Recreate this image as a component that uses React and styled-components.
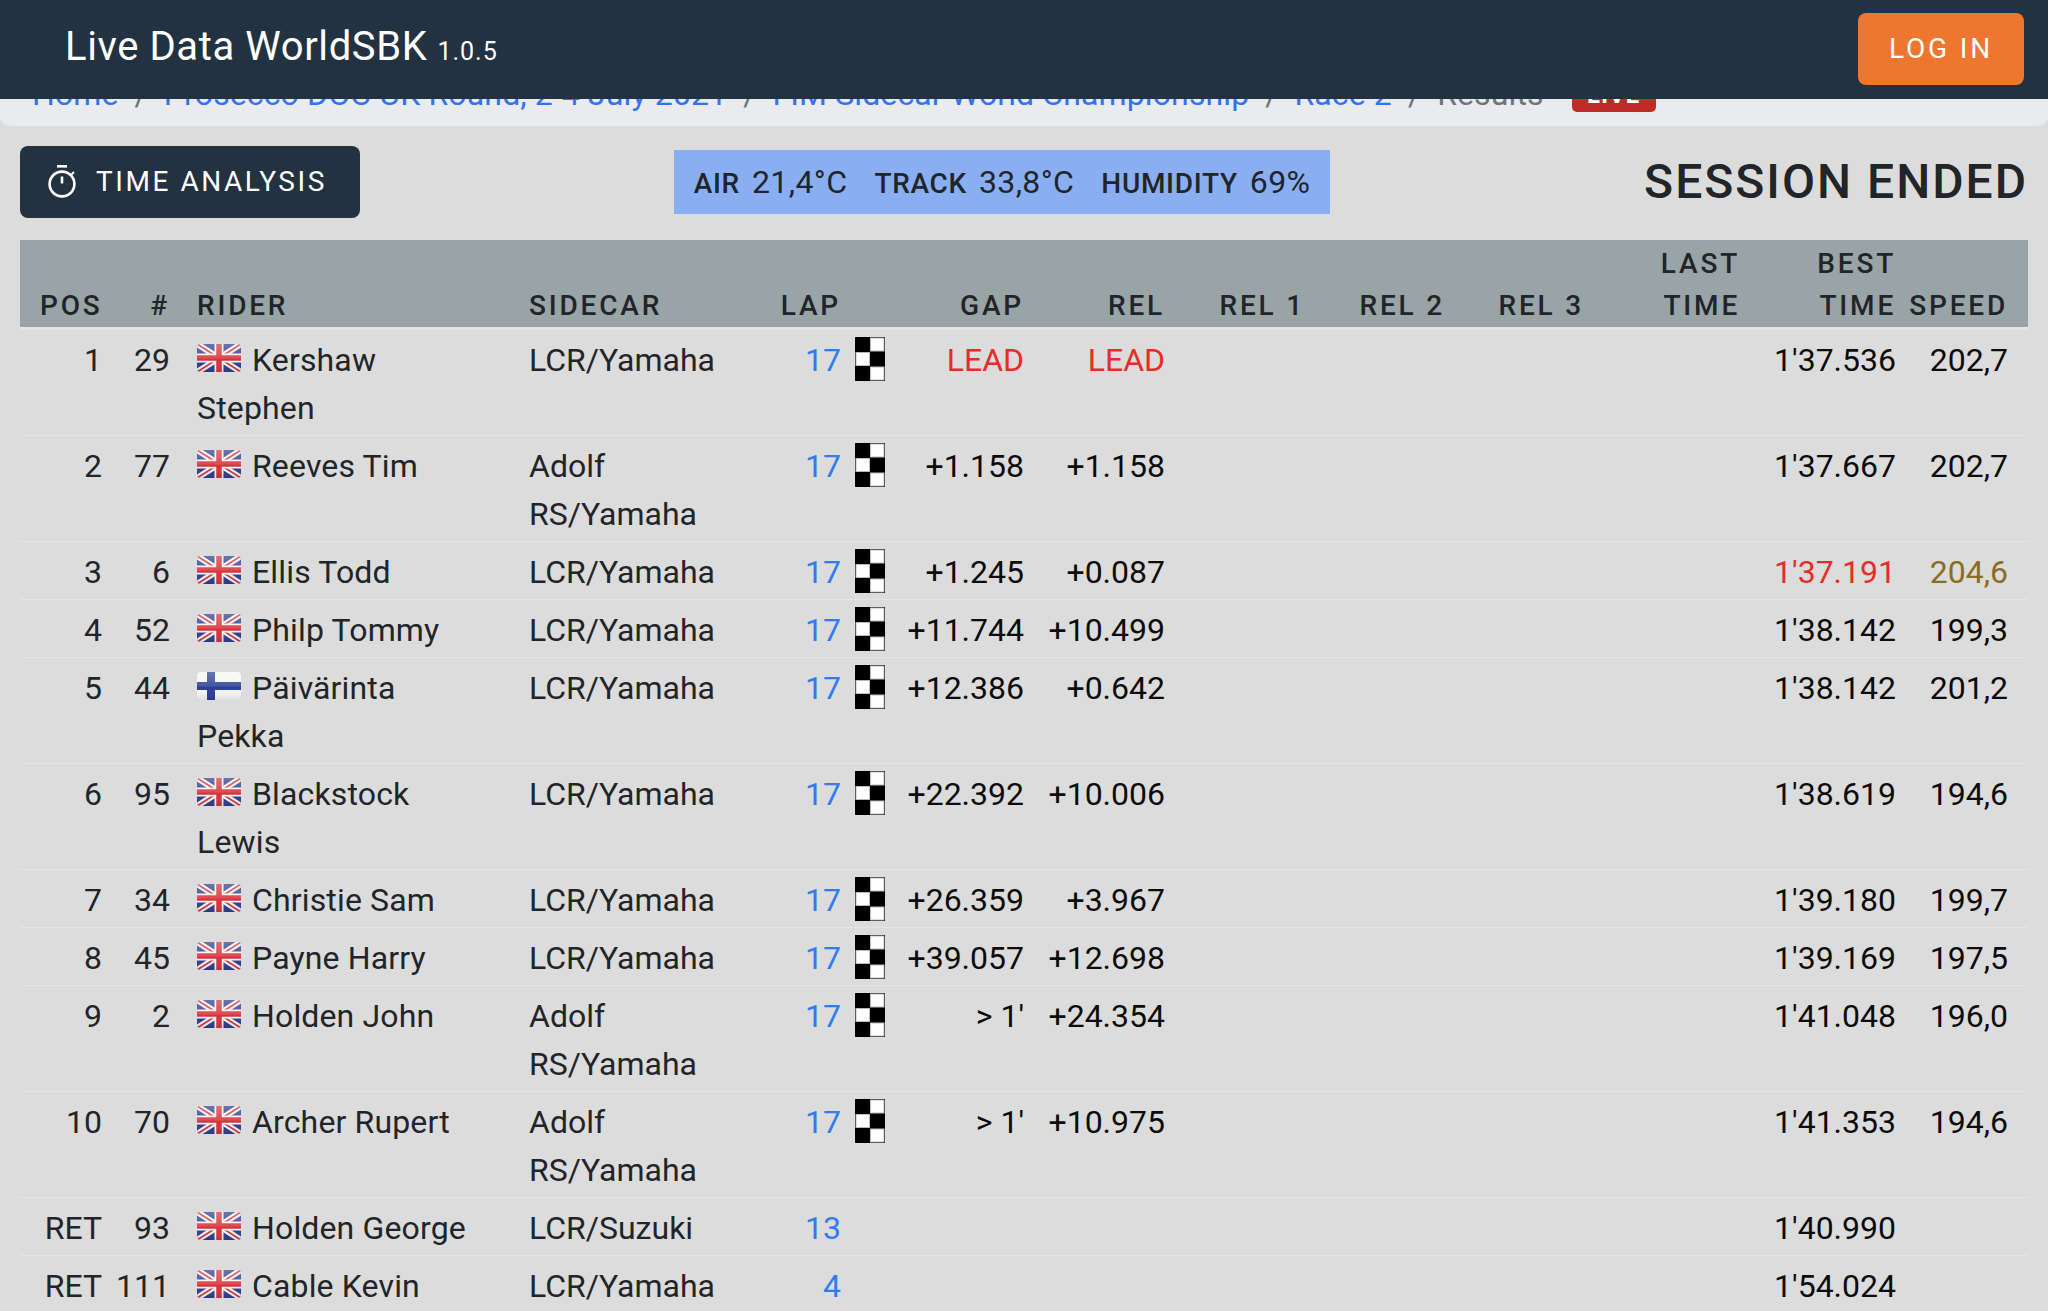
import React from 'react';
import styled, { createGlobalStyle } from 'styled-components';

const GlobalStyle = createGlobalStyle`
  html, body {
    margin: 0;
    height: 100%;
    overflow: hidden;
    background-color: #dcdcdc;
    color: #212529;
    font-family: Roboto, 'Liberation Sans', sans-serif;
    font-size: 32px;
    line-height: 48px;
  }
`;

const Navbar = styled.header`
  position: fixed;
  top: 0;
  left: 0;
  right: 0;
  z-index: 10;
  height: 99px;
  box-sizing: border-box;
  padding: 0 24px 0 65px;
  display: flex;
  align-items: center;
  justify-content: space-between;
  background-color: #233240;
`;

const Brand = styled.div`
  color: white;
  font-size: 40px;
  font-weight: 400;
  letter-spacing: 0.6px;
  white-space: nowrap;
`;

const Version = styled.span`
  font-size: 25px;
  font-weight: 400;
  margin-left: 10px;
  letter-spacing: 1px;
`;

const LoginButton = styled.button`
  width: 166px;
  height: 72px;
  margin-top: -1px;
  padding: 0 0 2px;
  border: 0;
  border-radius: 8px;
  background-color: #ed772f;
  color: white;
  font-family: inherit;
  font-size: 28px;
  font-weight: 400;
  letter-spacing: 2.8px;
`;

const Breadcrumb = styled.nav`
  height: 126px;
  box-sizing: border-box;
  padding: 70px 32px 0;
  display: flex;
  white-space: nowrap;
  background-color: #e9ebef;
  border-radius: 0 0 10px 10px;
`;

const Crumb = styled.a`
  color: #2f73f0;
  letter-spacing: 0.12px;
`;

const CurrentCrumb = styled.span`
  color: #6c757d;
  letter-spacing: 0.12px;
`;

const Separator = styled.span`
  color: #6c757d;
  margin: 0 16px;
`;

const LiveBadge = styled.span`
  align-self: flex-start;
  margin: 8px 0 0 28px;
  width: 84px;
  height: 34px;
  border-radius: 5px;
  background-color: #bd2c27;
  color: white;
  font-size: 24px;
  font-weight: 700;
  line-height: 34px;
  letter-spacing: 1px;
  text-align: center;
`;

const Toolbar = styled.section`
  margin: 20px 20px 22px 20px;
  display: flex;
  align-items: center;
  justify-content: space-between;
`;

const AnalysisButton = styled.button`
  width: 340px;
  height: 72px;
  padding: 0 0 2px 28px;
  display: flex;
  align-items: center;
  gap: 20px;
  border: 0;
  border-radius: 8px;
  background-color: #233240;
  color: white;
  font-family: inherit;
  font-size: 28px;
  font-weight: 400;
  letter-spacing: 2.55px;
  white-space: nowrap;
`;

const Weather = styled.div`
  height: 64px;
  box-sizing: border-box;
  padding: 2px 20px 0;
  display: flex;
  align-items: center;
  gap: 27px;
  background-color: #8aaef2;
  white-space: nowrap;
`;

const WeatherItem = styled.span`
  display: flex;
  align-items: baseline;
  gap: 12px;
`;

const WeatherLabel = styled.span`
  font-size: 28px;
  font-weight: 500;
  letter-spacing: 0.7px;
`;

const WeatherValue = styled.span`
  font-size: 32px;
  letter-spacing: 0.4px;
`;

const SessionState = styled.div`
  font-size: 48px;
  font-weight: 500;
  letter-spacing: 2px;
  white-space: nowrap;
`;

const Table = styled.table`
  width: 2008px;
  margin-left: 20px;
  table-layout: fixed;
  border-collapse: collapse;
`;

const HeadRow = styled.tr`
  background-color: #98a4a5;
  border-bottom: 3px solid #e2e5e8;
`;

const HeadCell = styled.th`
  height: 87px;
  box-sizing: border-box;
  padding: 3px ${(p) => p.$right || 0}px 0 ${(p) => p.$left || 0}px;
  vertical-align: bottom;
  text-align: ${(p) => p.$align};
  font-size: 28px;
  font-weight: 500;
  line-height: 42px;
  letter-spacing: 2.8px;
  white-space: nowrap;
`;

const Row = styled.tr`
  border-bottom: 1px solid #e2e5e8;
`;

const Cell = styled.td`
  padding: 6px ${(p) => p.$right || 0}px 3px ${(p) => p.$left || 0}px;
  vertical-align: top;
  text-align: ${(p) => p.$align};
  color: ${(p) => p.$color || '#212529'};
`;

const PosText = styled.span`
  display: block;
  text-align: right;
`;

const RiderName = styled.span`
  letter-spacing: 0.15px;
`;

const FlagIcon = styled.svg`
  width: 44px;
  height: 28px;
  margin-right: 11px;
  vertical-align: -1px;
`;

const Checkered = styled.svg`
  display: block;
  width: 30px;
  height: 44px;
  margin-top: 1px;
`;

const columns = [
  { width: 82, align: 'left', left: 20 },
  { width: 68, align: 'right' },
  { width: 332, align: 'left', left: 27, right: 20 },
  { width: 258, align: 'left', left: 27, right: 20 },
  { width: 81, align: 'right' },
  { width: 50, align: 'left', left: 14 },
  { width: 133, align: 'right' },
  { width: 141, align: 'right' },
  { width: 140, align: 'right' },
  { width: 140, align: 'right' },
  { width: 139, align: 'right' },
  { width: 156, align: 'right' },
  { width: 156, align: 'right' },
  { width: 132, align: 'right', right: 20 },
];

const headings = ['POS', '#', 'RIDER', 'SIDECAR', 'LAP', '', 'GAP', 'REL', 'REL 1', 'REL 2', 'REL 3', ['LAST', 'TIME'], ['BEST', 'TIME'], 'SPEED'];

const LCR = 'LCR/Yamaha';
const ADOLF = 'Adolf RS/Yamaha';

const rows = [
  ['1', '29', 'gb', 'Kershaw Stephen', LCR, '17', 'LEAD', 'LEAD', "1'37.536", '202,7'],
  ['2', '77', 'gb', 'Reeves Tim', ADOLF, '17', '+1.158', '+1.158', "1'37.667", '202,7'],
  ['3', '6', 'gb', 'Ellis Todd', LCR, '17', '+1.245', '+0.087', "1'37.191", '204,6'],
  ['4', '52', 'gb', 'Philp Tommy', LCR, '17', '+11.744', '+10.499', "1'38.142", '199,3'],
  ['5', '44', 'fi', 'Päivärinta Pekka', LCR, '17', '+12.386', '+0.642', "1'38.142", '201,2'],
  ['6', '95', 'gb', 'Blackstock Lewis', LCR, '17', '+22.392', '+10.006', "1'38.619", '194,6'],
  ['7', '34', 'gb', 'Christie Sam', LCR, '17', '+26.359', '+3.967', "1'39.180", '199,7'],
  ['8', '45', 'gb', 'Payne Harry', LCR, '17', '+39.057', '+12.698', "1'39.169", '197,5'],
  ['9', '2', 'gb', 'Holden John', ADOLF, '17', "> 1'", '+24.354', "1'41.048", '196,0'],
  ['10', '70', 'gb', 'Archer Rupert', ADOLF, '17', "> 1'", '+10.975', "1'41.353", '194,6'],
  ['RET', '93', 'gb', 'Holden George', 'LCR/Suzuki', '13', '', '', "1'40.990", ''],
  ['RET', '111', 'gb', 'Cable Kevin', LCR, '4', '', '', "1'54.024", ''],
];

const TimerIcon = () => (
  <svg width="28" height="33" viewBox="0 0 28 33" fill="none" stroke="white" strokeWidth="2.6">
    <path d="M9 1.3h10" />
    <circle cx="14" cy="19" r="12.4" />
    <path d="M14 11.5v7" />
    <path d="M23.5 9.5l2.5-2.5" strokeWidth="2" />
  </svg>
);

const Gloss = ({ id }) => (
  <>
    <defs>
      <linearGradient id={id} x1="0" y1="0" x2="0" y2="1">
        <stop offset="0" stopColor="white" stopOpacity="0.28" />
        <stop offset="0.5" stopColor="white" stopOpacity="0.12" />
        <stop offset="0.55" stopColor="white" stopOpacity="0" />
        <stop offset="1" stopColor="black" stopOpacity="0.1" />
      </linearGradient>
    </defs>
    <rect width="44" height="28" rx="4" fill={`url(#${id})`} />
  </>
);

const UkFlag = ({ id }) => (
  <FlagIcon viewBox="0 0 44 28">
    <defs>
      <clipPath id={`${id}-clip`}>
        <rect width="44" height="28" rx="4" />
      </clipPath>
    </defs>
    <g clipPath={`url(#${id}-clip)`}>
      <rect width="44" height="28" fill="#2f3f8f" />
      <path d="M0 0L44 28M44 0L0 28" stroke="#f4f4f4" strokeWidth="6" />
      <path d="M0 0L44 28M44 0L0 28" stroke="#d8333a" strokeWidth="1.8" />
      <path d="M22 0V28M0 14H44" stroke="#f4f4f4" strokeWidth="9" />
      <path d="M22 0V28M0 14H44" stroke="#d8333a" strokeWidth="5.5" />
    </g>
    <Gloss id={`${id}-gloss`} />
  </FlagIcon>
);

const FiFlag = ({ id }) => (
  <FlagIcon viewBox="0 0 44 28">
    <defs>
      <clipPath id={`${id}-clip`}>
        <rect width="44" height="28" rx="4" />
      </clipPath>
    </defs>
    <g clipPath={`url(#${id}-clip)`}>
      <rect width="44" height="28" fill="#f6f6f4" />
      <path d="M14 0V28M0 14H44" stroke="#2a3f97" strokeWidth="8" />
    </g>
    <Gloss id={`${id}-gloss`} />
  </FlagIcon>
);

const FinishFlag = () => (
  <Checkered viewBox="0 0 30 44">
    <rect width="30" height="44" fill="black" />
    <rect x="15.5" y="1" width="13.5" height="13" fill="white" stroke="#bbb" strokeWidth="1" />
    <rect x="1" y="15.5" width="13.5" height="13" fill="white" stroke="#bbb" strokeWidth="1" />
    <rect x="15.5" y="30" width="13.5" height="13" fill="white" stroke="#bbb" strokeWidth="1" />
  </Checkered>
);

const RED = '#e52d27';
const BLUE = '#2f7bf5';
const NUMBER = '#0c0c0c';

const ResultRow = ({ row, index }) => {
  const [pos, num, flag, rider, sidecar, lap, gap, rel, best, speed] = row;
  const isFastest = best === "1'37.191";
  const cell = (i, content, color) => (
    <Cell $align={columns[i].align} $left={columns[i].left} $right={columns[i].right} $color={color}>
      {content}
    </Cell>
  );
  const id = `flag-${index}`;
  return (
    <Row>
      {cell(0, <PosText>{pos}</PosText>)}
      {cell(1, num)}
      {cell(2, <>{flag === 'fi' ? <FiFlag id={id} /> : <UkFlag id={id} />}<RiderName>{rider}</RiderName></>)}
      {cell(3, sidecar)}
      {cell(4, lap, BLUE)}
      {cell(5, lap === '17' ? <FinishFlag /> : null)}
      {cell(6, gap, gap === 'LEAD' ? RED : NUMBER)}
      {cell(7, rel, rel === 'LEAD' ? RED : NUMBER)}
      {cell(8, '')}
      {cell(9, '')}
      {cell(10, '')}
      {cell(11, '')}
      {cell(12, best, isFastest ? RED : NUMBER)}
      {cell(13, speed, isFastest ? '#8a6d22' : NUMBER)}
    </Row>
  );
};

export default function App() {
  return (
    <>
      <GlobalStyle />
      <Navbar>
        <Brand>
          Live Data WorldSBK<Version>1.0.5</Version>
        </Brand>
        <LoginButton>LOG IN</LoginButton>
      </Navbar>
      <Breadcrumb>
        <Crumb>Home</Crumb>
        <Separator>/</Separator>
        <Crumb>Prosecco DOC UK Round, 2-4 July 2021</Crumb>
        <Separator>/</Separator>
        <Crumb>FIM Sidecar World Championship</Crumb>
        <Separator>/</Separator>
        <Crumb>Race 2</Crumb>
        <Separator>/</Separator>
        <CurrentCrumb>Results</CurrentCrumb>
        <LiveBadge>LIVE</LiveBadge>
      </Breadcrumb>
      <Toolbar>
        <AnalysisButton>
          <TimerIcon />
          TIME ANALYSIS
        </AnalysisButton>
        <Weather>
          <WeatherItem>
            <WeatherLabel>AIR</WeatherLabel>
            <WeatherValue>21,4°C</WeatherValue>
          </WeatherItem>
          <WeatherItem>
            <WeatherLabel>TRACK</WeatherLabel>
            <WeatherValue>33,8°C</WeatherValue>
          </WeatherItem>
          <WeatherItem>
            <WeatherLabel>HUMIDITY</WeatherLabel>
            <WeatherValue>69%</WeatherValue>
          </WeatherItem>
        </Weather>
        <SessionState>SESSION ENDED</SessionState>
      </Toolbar>
      <Table>
        <colgroup>
          {columns.map((c, i) => (
            <col key={i} style={{ width: c.width }} />
          ))}
        </colgroup>
        <thead>
          <HeadRow>
            {headings.map((h, i) => (
              <HeadCell key={i} $align={columns[i].align} $left={columns[i].left} $right={columns[i].right}>
                {Array.isArray(h) ? (
                  <>
                    {h[0]}
                    <br />
                    {h[1]}
                  </>
                ) : (
                  h
                )}
              </HeadCell>
            ))}
          </HeadRow>
        </thead>
        <tbody>
          {rows.map((r, i) => (
            <ResultRow key={i} row={r} index={i} />
          ))}
        </tbody>
      </Table>
    </>
  );
}
